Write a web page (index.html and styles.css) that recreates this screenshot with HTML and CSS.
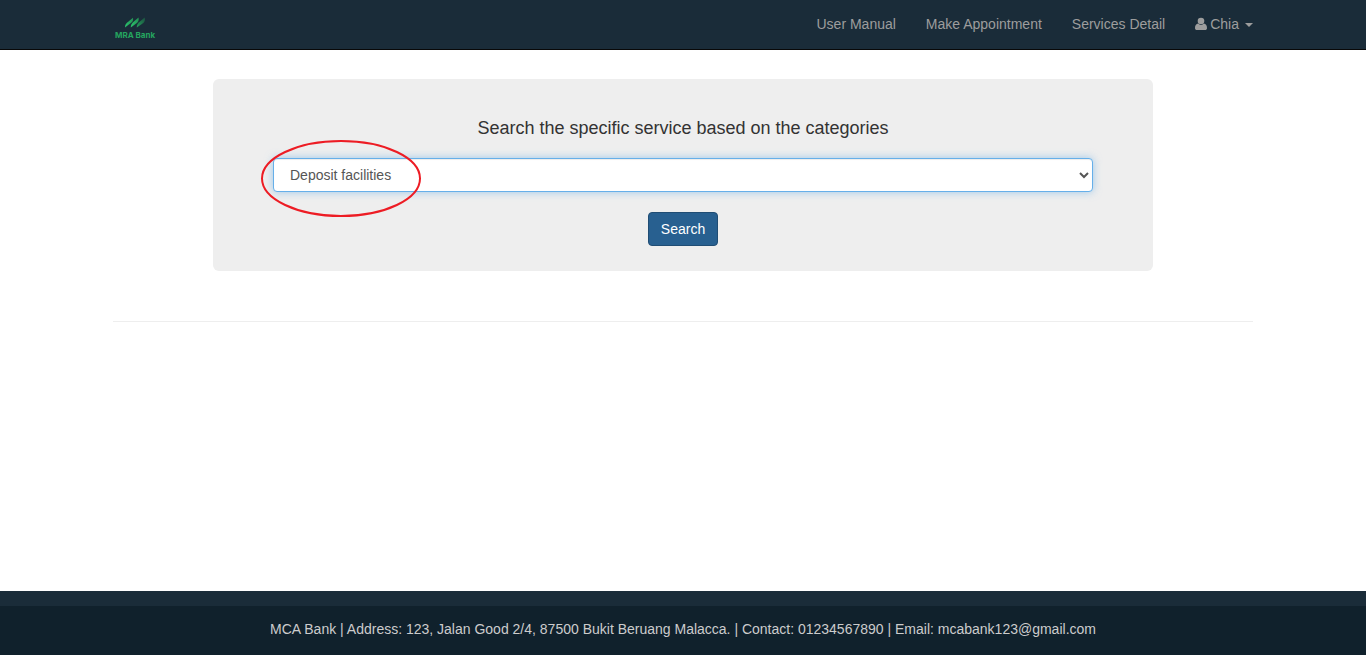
FILE: index.html
```html
<!DOCTYPE html>
<html lang="en">
<head>
<meta charset="utf-8">
<meta name="viewport" content="width=device-width, initial-scale=1">
<title>MRA Bank - Services Detail</title>
<link rel="stylesheet" href="styles.css">
</head>
<body>
<header class="navbar">
  <div class="container navbar-inner">
    <a class="brand" href="#" aria-label="MRA Bank home">
      <svg class="brand-mark" viewBox="0 0 20 11" aria-hidden="true">
        <defs>
          <linearGradient id="leaf" x1="0" y1="0" x2="1" y2="0">
            <stop offset="0" stop-color="#2bc46d"/>
            <stop offset="1" stop-color="#239254"/>
          </linearGradient>
          <linearGradient id="leaf-dark" x1="0" y1="1" x2="1" y2="0">
            <stop offset="0" stop-color="#23a05a"/>
            <stop offset="1" stop-color="#1c5040"/>
          </linearGradient>
        </defs>
        <path fill="url(#leaf)" d="M0 10.500C0 8.300.6 7 2 5.700L8 .8C8.300 2.800 8 4.300 6.500 5.600Z"/>
        <path fill="url(#leaf)" d="M5.800 10.500C5.800 8.500 6.300 7 7.800 5.500L13.500 .5C14 2.600 13.800 4.300 12.200 5.700Z"/>
        <path fill="url(#leaf-dark)" d="M11.800 10.500C11.800 8.500 12.300 7 13.800 5.500L19.700 .5C20.200 2.600 20 4.500 18.300 6Z"/>
      </svg>
      <span class="brand-name">MRA Bank</span>
    </a>
    <nav class="nav" aria-label="Main">
      <a href="#">User Manual</a>
      <a href="#">Make Appointment</a>
      <a href="#">Services Detail</a>
      <a href="#" class="account">
        <svg class="user-icon" viewBox="0 0 12 14" aria-hidden="true">
          <circle cx="6" cy="4" r="3.300"/>
          <path d="M3.200 6.500C1 6.800 0 8.500 0 11C0 12.400.8 13 2 13H10C11.200 13 12 12.400 12 11C12 8.500 11 6.800 8.800 6.500C7.200 8.400 4.800 8.400 3.200 6.500Z"/>
        </svg>
        <span>Chia</span>
        <span class="caret"></span>
      </a>
    </nav>
  </div>
</header>

<main class="container content">
  <form class="search-panel">
    <label class="search-title" for="category">Search the specific service based on the categories</label>
    <div class="select-wrap">
      <select id="category" class="category">
        <option>Deposit facilities</option>
      </select>
      <svg class="highlight" viewBox="0 0 160 77" aria-hidden="true">
        <ellipse cx="80" cy="38.500" rx="79" ry="37.500"/>
      </svg>
    </div>
    <button class="search-button" type="button">Search</button>
  </form>
  <hr class="divider">
</main>

<footer class="footer">
  <p class="footer-text">MCA Bank | Address: 123, Jalan Good 2/4, 87500 Bukit Beruang Malacca. | Contact: 01234567890 | Email: mcabank123@gmail.com</p>
</footer>
</body>
</html>
```

FILE: styles.css
```css
* {
  box-sizing: border-box;
}

body {
  display: flex;
  flex-direction: column;
  min-height: 100vh;
  margin: 0;
  background: #fff;
  color: #333;
  font-family: "Liberation Sans", Arial, sans-serif;
  font-size: 14px;
  line-height: 20px;
}

.container {
  width: 100%;
  max-width: 1170px;
  margin: 0 auto;
  padding: 0 15px;
}

.navbar {
  background: #1a2c39;
  border-bottom: 1px solid #080808;
}

.navbar-inner {
  display: flex;
  align-items: center;
  justify-content: space-between;
}

.brand {
  display: flex;
  flex-direction: column;
  align-items: center;
  padding: 10px 2px 0;
  color: #25a55f;
  text-decoration: none;
}

.brand-mark {
  width: 20px;
  height: 11px;
}

.brand-name {
  font: 700 8px/14px Inter, sans-serif;
}

.nav {
  display: flex;
  gap: 30px;
  padding: 14px 0 15px;
}

.nav a {
  color: #9d9d9d;
  text-decoration: none;
}

.account {
  display: flex;
  align-items: center;
}

.user-icon {
  width: 12px;
  height: 14px;
  margin-right: 3px;
  fill: currentColor;
}

.caret {
  margin-top: 2px;
  margin-left: 6px;
  border-top: 4px solid;
  border-right: 4px solid transparent;
  border-left: 4px solid transparent;
}

.content {
  flex: 1;
}

.search-panel {
  display: flex;
  flex-direction: column;
  align-items: center;
  max-width: 940px;
  margin: 29px auto 50px;
  padding: 39px 60px 25px;
  background: #eee;
  border-radius: 6px;
}

.search-title {
  margin-bottom: 20px;
  font-size: 18px;
  line-height: 20px;
  text-align: center;
}

.select-wrap {
  position: relative;
  width: 100%;
  margin-bottom: 20px;
}

.category {
  display: block;
  width: 100%;
  height: 34px;
  padding: 6px 12px;
  background-color: #fff;
  border: 1px solid #66afe9;
  border-radius: 4px;
  outline: 0;
  box-shadow: inset 0 1px 1px rgba(0, 0, 0, .075), 0 0 8px rgba(102, 175, 233, .6);
  color: #555;
  font: inherit;
}

.highlight {
  position: absolute;
  top: -18px;
  left: -12px;
  width: 160px;
  height: 77px;
  fill: none;
  stroke: #ed1c24;
  stroke-width: 2;
  pointer-events: none;
}

.search-button {
  height: 34px;
  padding: 6px 12px;
  background: #286090;
  border: 1px solid #204d74;
  border-radius: 4px;
  color: #fff;
  font: inherit;
}

.divider {
  height: 1px;
  margin: 0;
  background: #eee;
  border: 0;
}

.footer {
  background: #10212c;
  border-top: 15px solid #1a2c39;
}

.footer-text {
  margin: 0;
  padding: 13px 15px 16px;
  color: #ccc;
  text-align: center;
}
```
